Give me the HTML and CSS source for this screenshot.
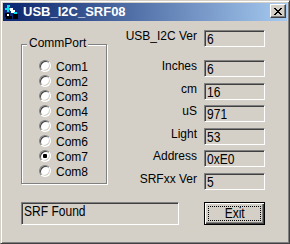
FILE: index.html
```html
<!DOCTYPE html>
<html>
<head>
<meta charset="utf-8">
<link rel="stylesheet" href="styles.css">
</head>
<body>
<div class="window">
  <div class="titlebar">
    <svg class="app-icon" width="16" height="16" viewBox="0 0 16 16">
      <rect width="16" height="16" fill="#0c2a78"/>
      <path d="M3 1h3v2H5v1h2v2H5v2H3V6H1V4h2z" fill="#00e0f0"/>
      <path d="M6 4h3v2h2v3H7V7H6z" fill="#ffffff"/>
      <path d="M1 9h5v3h2v3H2v-2H1z" fill="#000000"/>
      <path d="M9 10h5v5H9z" fill="#000000"/>
      <path d="M10 8h3v2h-3z" fill="#00e0f0"/>
      <path d="M3 10h2v2H3z" fill="#ffffff"/>
    </svg>
    <span class="title">USB_I2C_SRF08</span>
    <button class="close" type="button" aria-label="Close">
      <svg width="8" height="7" viewBox="0 0 8 7"><path d="M0 0h2v1H0z M6 0h2v1H6z M1 1h2v1H1z M5 1h2v1H5z M2 2h4v1H2z M3 3h2v1H3z M2 4h4v1H2z M1 5h2v1H1z M5 5h2v1H5z M0 6h2v1H0z M6 6h2v1H6z" fill="#000"/></svg>
    </button>
  </div>
  <div class="client">
    <div class="top">
      <div class="group">
        <span class="group-title">CommPort</span>
        <ul class="radios">
          <li><span class="radio"></span>Com1</li>
          <li><span class="radio"></span>Com2</li>
          <li><span class="radio"></span>Com3</li>
          <li><span class="radio"></span>Com4</li>
          <li><span class="radio"></span>Com5</li>
          <li><span class="radio"></span>Com6</li>
          <li><span class="radio checked"></span>Com7</li>
          <li><span class="radio"></span>Com8</li>
        </ul>
      </div>
      <div class="fields">
        <div class="row first"><span class="label">USB_I2C Ver</span><span class="value"><span class="nt">6</span></span></div>
        <div class="row"><span class="label">Inches</span><span class="value"><span class="nt">6</span></span></div>
        <div class="row"><span class="label">cm</span><span class="value"><span class="nt">16</span></span></div>
        <div class="row"><span class="label">uS</span><span class="value"><span class="nt">971</span></span></div>
        <div class="row"><span class="label">Light</span><span class="value"><span class="nt">53</span></span></div>
        <div class="row"><span class="label">Address</span><span class="value"><span class="nt">0xE0</span></span></div>
        <div class="row"><span class="label">SRFxx Ver</span><span class="value"><span class="nt">5</span></span></div>
      </div>
    </div>
    <div class="bottom">
      <div class="status"><span class="nt">SRF Found</span></div>
      <button class="exit" type="button"><span class="focus"><span class="nt">Exit</span></span></button>
    </div>
  </div>
</div>
</body>
</html>
```
FILE: styles.css
```css
* { box-sizing: border-box; }
html, body { margin: 0; padding: 0; background: #d4d0c8; }
body { font-family: "Liberation Sans", Arial, sans-serif; font-size: 12px; color: #000; }

.window {
  width: 290px;
  height: 244px;
  background: #d4d0c8;
  border: 1px solid;
  border-color: #d4d0c8 #404040 #404040 #d4d0c8;
  box-shadow: inset 1px 1px #ffffff, inset -1px -1px #808080;
  padding: 2px;
  display: flex;
  flex-direction: column;
}

.titlebar {
  height: 18px;
  flex: none;
  display: flex;
  align-items: center;
  background: linear-gradient(to right, #0a246a, #a6caf0);
}
.app-icon { flex: none; margin-left: 1px; display: block; }
.title {
  margin-left: 3px;
  color: #fff;
  font-weight: bold;
  font-size: 13px;
  line-height: 16px;
  flex: 1;
}
.close {
  flex: none;
  width: 16px;
  height: 14px;
  margin: 0 1px 0 0;
  align-self: flex-start;
  margin-top: 1px;
  padding: 0;
  background: #d4d0c8;
  border: 1px solid;
  border-color: #ffffff #404040 #404040 #ffffff;
  box-shadow: inset -1px -1px #808080;
  display: flex;
  align-items: center;
  justify-content: center;
}
.close svg { display: block; margin-left: -1px; }

.client {
  flex: 1;
  display: flex;
  flex-direction: column;
  padding-bottom: 16px;
}
.top { display: flex; align-items: flex-start; }

.group {
  position: relative;
  margin-left: 18px;
  margin-top: 23px;
  width: 86px;
  height: 140px;
  border: 1px solid #808080;
  box-shadow: inset 1px 1px #ffffff, 1px 1px #ffffff;
}
.group-title {
  position: absolute;
  top: -9px;
  left: 5px;
  padding: 0 2px;
  background: #d4d0c8;
  line-height: 14px;
}
.radios {
  list-style: none;
  margin: 0;
  padding: 15px 0 0 17px;
  display: flex;
  flex-direction: column;
  gap: 3px;
}
.radios li {
  height: 12px;
  display: flex;
  align-items: center;
  gap: 5px;
  line-height: 12px;
  padding-top: 1px;
}
.radio {
  flex: none;
  position: relative;
  width: 12px;
  height: 12px;
  margin-top: -1px;
  border-radius: 50%;
  border: 1px solid;
  border-color: #808080 #ffffff #ffffff #808080;
  background: #ffffff;
  box-shadow: inset 1px 1px #404040, inset -1px -1px #d4d0c8;
}
.radio.checked::after {
  content: "";
  position: absolute;
  left: 3px;
  top: 3px;
  width: 4px;
  height: 4px;
  border-radius: 1px;
  background: #000;
}

.fields {
  margin-top: 9px;
  display: flex;
  flex-direction: column;
  gap: 5.6px;
}
.row {
  display: flex;
  align-items: flex-start;
  gap: 7px;
}
.row.first { margin-bottom: 7.4px; }
.label {
  width: 90px;
  text-align: right;
  line-height: 12px;
  white-space: nowrap;
}
.nt {
  display: inline-block;
  transform: scaleX(0.86);
  transform-origin: 0 0;
  font-size: 14px;
  line-height: 14px;
  white-space: nowrap;
}
.value {
  width: 61px;
  height: 17px;
  border: 1px solid;
  border-color: #808080 #ffffff #ffffff #808080;
  box-shadow: inset 1px 1px #404040, inset -1px -1px #d4d0c8;
  padding: 1px 0 0 2px;
  line-height: 14px;
  overflow: hidden;
}

.bottom {
  margin-top: auto;
  display: flex;
  align-items: flex-start;
}
.status {
  margin-left: 18px;
  width: 158px;
  height: 23px;
  border: 1px solid;
  border-color: #808080 #ffffff #ffffff #808080;
  box-shadow: inset 1px 1px #404040, inset -1px -1px #d4d0c8;
  padding: 1px 0 0 2px;
  line-height: 14px;
}
.exit {
  margin-left: 25px;
  width: 61px;
  height: 23px;
  padding: 3px;
  background: #d4d0c8;
  border: 1px solid #000;
  box-shadow: inset 1px 1px #ffffff, inset -1px -1px #404040, inset -2px -2px #808080;
  display: flex;
  font-family: inherit;
}
.focus {
  flex: 1;
  border: 1px dotted #000;
  display: flex;
  align-items: center;
  justify-content: center;
  padding-bottom: 2px;
  color: #000;
}
.focus .nt { transform-origin: 50% 0; }
```
